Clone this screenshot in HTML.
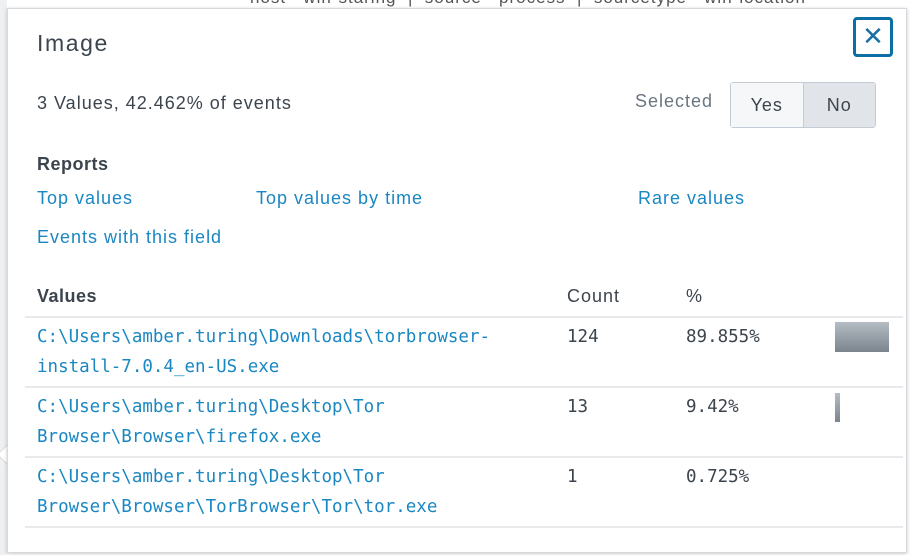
<!DOCTYPE html>
<html><head><style>
body{margin:0;width:916px;height:555px;overflow:hidden;background:#fff;position:relative;font-family:"Liberation Sans",sans-serif;color:#3c444d;letter-spacing:1px}
.bgl{position:absolute;left:0;top:0;width:7px;height:555px;background:#eef0f2}
.top{position:absolute;left:250px;top:-12px;font-size:17px;color:#555;white-space:nowrap}
.pop{position:absolute;left:7px;top:8px;width:898px;height:543px;background:#fff;border:1px solid #d5d8dc;box-shadow:0 1px 4px rgba(0,0,0,.2)}
.arrow{position:absolute;left:0px;top:447px;width:14px;height:14px;background:#fff;transform:rotate(45deg);border-left:1px solid #d5d8dc;border-bottom:1px solid #d5d8dc}
.a{position:absolute;white-space:nowrap}
.lnk{color:#1a87c2;font-size:18px}
.mono{font-family:"DejaVu Sans Mono",monospace;font-size:17.5px;line-height:30px;letter-spacing:0}
.line{position:absolute;left:25px;width:878px;height:2px;background:#e8eaec}
.close{position:absolute;left:853px;top:17px;width:40px;height:40px;border:3px solid #0b6ea4;border-radius:4px;box-sizing:border-box;color:#1a6ea4;font-size:26px;text-align:center;line-height:32px;letter-spacing:0}
.tog{position:absolute;left:730px;top:82px;width:146px;height:46px;border:1px solid #c3cbd4;border-radius:3px;box-sizing:border-box;display:flex;font-size:18px}
.tog div{flex:1;text-align:center;line-height:44px}
.bar{position:absolute;background:linear-gradient(#b5bcc4,#7b848d)}
</style></head><body>
<div class="bgl"></div>
<div class="top">host &nbsp; win·staring &nbsp;| &nbsp;source &nbsp; process &nbsp;| &nbsp;sourcetype &nbsp; win·location</div>
<div class="arrow"></div>
<div class="pop"></div>
<div class="a" style="left:37px;top:30px;font-size:23px;color:#3c444d;letter-spacing:1.6px">Image</div>
<div class="close">✕</div>
<div class="a" style="left:37px;top:93px;font-size:18px">3 Values, 42.462% of events</div>
<div class="a" style="left:635px;top:91px;font-size:18px;color:#6b7580">Selected</div>
<div class="tog"><div style="background:#f6f7f8;border-right:1px solid #c3cbd4">Yes</div><div style="background:#e1e5e9">No</div></div>
<div class="a" style="left:37px;top:154px;font-size:18px;font-weight:bold;letter-spacing:0.5px">Reports</div>
<div class="a lnk" style="left:37px;top:188px">Top values</div>
<div class="a lnk" style="left:256px;top:188px">Top values by time</div>
<div class="a lnk" style="left:638px;top:188px">Rare values</div>
<div class="a lnk" style="left:37px;top:227px">Events with this field</div>
<div class="a" style="left:37px;top:286px;font-size:18px;font-weight:bold;letter-spacing:0.5px">Values</div>
<div class="a" style="left:567px;top:286px;font-size:18px">Count</div>
<div class="a" style="left:686px;top:286px;font-size:18px">%</div>
<div class="line" style="top:316px"></div>
<div class="line" style="top:386px"></div>
<div class="line" style="top:456px"></div>
<div class="line" style="top:526px"></div>
<div class="a mono lnk" style="left:37px;top:322px;font-size:17.5px">C:\Users\amber.turing\Downloads\torbrowser-<br>install-7.0.4_en-US.exe</div>
<div class="a mono" style="left:567px;top:322px">124</div>
<div class="a mono" style="left:686px;top:322px">89.855%</div>
<div class="bar" style="left:835px;top:322px;width:54px;height:30px"></div>
<div class="a mono lnk" style="left:37px;top:392px;font-size:17.5px">C:\Users\amber.turing\Desktop\Tor<br>Browser\Browser\firefox.exe</div>
<div class="a mono" style="left:567px;top:392px">13</div>
<div class="a mono" style="left:686px;top:392px">9.42%</div>
<div class="bar" style="left:835px;top:393px;width:5px;height:29px"></div>
<div class="a mono lnk" style="left:37px;top:462px;font-size:17.5px">C:\Users\amber.turing\Desktop\Tor<br>Browser\Browser\TorBrowser\Tor\tor.exe</div>
<div class="a mono" style="left:567px;top:462px">1</div>
<div class="a mono" style="left:686px;top:462px">0.725%</div>
</body></html>
